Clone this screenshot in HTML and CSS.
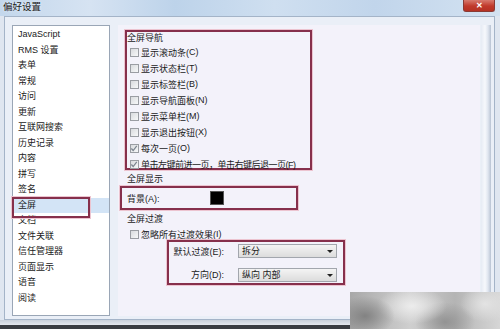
FILE: index.html
```html
<!DOCTYPE html>
<html lang="zh">
<head>
<meta charset="utf-8">
<title>偏好设置</title>
<link rel="stylesheet" href="styles.css">
</head>
<body>
<div class="window">
  <div class="titlebar">
    <span class="title">偏好设置</span>
    <span class="close">✕</span>
  </div>
  <div class="frame">
    <ul class="sidebar">
      <li>JavaScript</li>
      <li>RMS 设置</li>
      <li>表单</li>
      <li>常规</li>
      <li>访问</li>
      <li>更新</li>
      <li>互联网搜索</li>
      <li>历史记录</li>
      <li>内容</li>
      <li>拼写</li>
      <li>签名</li>
      <li class="selected">全屏</li>
      <li>文档</li>
      <li>文件关联</li>
      <li>信任管理器</li>
      <li>页面显示</li>
      <li>语音</li>
      <li>阅读</li>
    </ul>
    <div class="panel">
      <div class="mark box-nav">
        <div class="group-title">全屏导航</div>
        <label class="row"><span class="cb"></span>显示滚动条(<u>C</u>)</label>
        <label class="row"><span class="cb"></span>显示状态栏(<u>T</u>)</label>
        <label class="row"><span class="cb"></span>显示标签栏(<u>B</u>)</label>
        <label class="row"><span class="cb"></span>显示导航面板(<u>N</u>)</label>
        <label class="row"><span class="cb"></span>显示菜单栏(<u>M</u>)</label>
        <label class="row"><span class="cb"></span>显示退出按钮(<u>X</u>)</label>
        <label class="row"><span class="cb checked"><svg viewBox="0 0 9 9" width="9" height="9"><path d="M1.5 4.5 L3.6 6.8 L7.6 1.6" fill="none" stroke="#7d8590" stroke-width="1.4"/></svg></span>每次一页(<u>O</u>)</label>
        <label class="row"><span class="cb checked"><svg viewBox="0 0 9 9" width="9" height="9"><path d="M1.5 4.5 L3.6 6.8 L7.6 1.6" fill="none" stroke="#7d8590" stroke-width="1.4"/></svg></span><span class="tight">单击左键前进一页，单击右键后退一页(<u>F</u>)</span></label>
      </div>
      <div class="section-title">全屏显示</div>
      <div class="mark box-bg">
        <span class="bg-label">背景(<u>A</u>):</span>
        <span class="swatch"></span>
      </div>
      <div class="section-title">全屏过渡</div>
      <label class="row row-plain"><span class="cb"></span>忽略所有过渡效果(<u>I</u>)</label>
      <div class="mark box-trans">
        <span class="field-label">默认过渡(<u>E</u>):</span>
        <span class="select">拆分<span class="arrow"></span></span>
        <span class="field-label">方向(<u>D</u>):</span>
        <span class="select">纵向 内部<span class="arrow"></span></span>
      </div>
    </div>
    <div class="edge"></div>
  </div>
  <div class="strip"></div>
  <div class="taskbar"></div>
  <div class="watermark"></div>
</div>
</body>
</html>
```

FILE: styles.css
```css
* { box-sizing: border-box; }
html, body { margin: 0; padding: 0; }
body {
  width: 500px;
  height: 329px;
  overflow: hidden;
  font-family: "Liberation Sans", "Noto Sans CJK SC", sans-serif;
  font-size: 9px;
  color: #1a1a1a;
  background: #dfe6f0;
}
u { text-decoration: none; }

.window {
  position: relative;
  width: 500px;
  height: 329px;
  display: flex;
  flex-direction: column;
}

.titlebar {
  position: relative;
  height: 16px;
  flex: 0 0 16px;
  background: linear-gradient(90deg, #c3d7ec 0%, #d6e3f2 18%, #bdd3ea 35%, #cfdff0 55%, #c1d5eb 75%, #d3e2f1 100%);
  display: flex;
  align-items: center;
  padding-left: 3px;
}
.title {
  font-size: 9.5px;
  color: #1b1b1b;
  text-shadow: 0 0 3px #eef4fb;
  line-height: 12px;
  margin-top: -3px;
}
.close {
  position: absolute;
  right: 5px;
  top: 0;
  width: 32px;
  height: 12px;
  border-radius: 0 0 3px 3px;
  background: linear-gradient(#d77a6e, #c0392b 55%, #b53224);
  border: 1px solid #8a3a34;
  border-top: none;
  color: #fff;
  font-size: 8px;
  line-height: 11px;
  text-align: center;
  font-weight: bold;
}

.frame {
  flex: 0 0 304px;
  margin: 0 5px 0 4px;
  border: 1px solid #a4b4c8;
  background: #eaeff7;
  padding: 8px 2px 3px 7px;
  display: flex;
}

.sidebar {
  list-style: none;
  margin: 0;
  padding: 1px 0 0 0;
  width: 98px;
  flex: 0 0 98px;
  height: 291px;
  background: #ffffff;
  border: 1px solid #9aa6b6;
}
.sidebar li {
  height: 15.5px;
  line-height: 15.5px;
  padding-left: 5px;
  white-space: nowrap;
}
.sidebar li.selected {
  position: relative;
  background: #d3e4f6;
}
.sidebar li.selected::after {
  content: "";
  position: absolute;
  left: -1px;
  top: -0.5px;
  width: 74px;
  height: 17px;
  border: 2px solid #86304c;
  box-shadow: 0 0 0 1px #ecc4d0;
}

.panel {
  margin-left: 8px;
  width: 362px;
  flex: 0 0 362px;
  height: 291px;
  background: #f3f2fa;
  padding-top: 5px;
  display: flex;
  flex-direction: column;
  align-items: flex-start;
}

.mark {
  border: 2px solid #86304c;
  box-shadow: 0 0 0 1px #ecc4d0;
}

.box-nav {
  margin-left: 7px;
  width: 187px;
  height: 140px;
  padding-top: 1px;
}
.group-title {
  height: 11px;
  line-height: 11px;
}
.row {
  display: flex;
  align-items: center;
  height: 16px;
  padding-left: 3px;
  white-space: nowrap;
}
.tight { letter-spacing: -0.5px; }
.cb {
  width: 9px;
  height: 9px;
  flex: 0 0 9px;
  margin-right: 2px;
  border: 1px solid #9a9da3;
  background: linear-gradient(135deg, #d9dbde, #f7f8f9);
  display: flex;
}
.cb.checked svg { margin: -1px 0 0 -1px; }

.section-title {
  margin-left: 9px;
  height: 13px;
  line-height: 13px;
  margin-top: 3px;
}

.box-bg {
  margin-left: 2px;
  width: 178px;
  height: 24px;
  display: flex;
  align-items: center;
  padding-left: 5px;
}
.bg-label { width: 83px; }
.swatch {
  width: 14px;
  height: 14px;
  background: #000;
  border: 1px solid #555;
}

.box-bg + .section-title { margin-top: 3px; }

.row-plain {
  margin-left: 9px;
  height: 16px;
}

.box-trans {
  margin-left: 49px;
  margin-top: -2px;
  width: 178px;
  height: 45px;
  display: grid;
  grid-template-columns: 55px 99px;
  column-gap: 14px;
  row-gap: 7px;
  padding-top: 1px;
  align-items: center;
}
.field-label {
  text-align: right;
  white-space: nowrap;
}
.select {
  position: relative;
  height: 14px;
  line-height: 12px;
  padding-left: 3px;
  border: 1px solid #a2a6ad;
  background: linear-gradient(#f4f4f4, #dcdcdc);
  white-space: nowrap;
}
.arrow {
  position: absolute;
  right: 3px;
  top: 5px;
  width: 0;
  height: 0;
  border-left: 3px solid transparent;
  border-right: 3px solid transparent;
  border-top: 3px solid #222;
}

.edge {
  flex: 0 0 10px;
  margin-left: 1px;
  height: 291px;
  background: linear-gradient(90deg, #e6ebf4 0%, #f6f8fc 40%, #dfe5ef 70%, #b8c3d3 100%);
}

.strip {
  flex: 0 0 5px;
  background: linear-gradient(#c9d0da, #e4e8ee);
}
.taskbar {
  flex: 0 0 4px;
  background: #3a3d42;
}

.watermark {
  position: absolute;
  left: 350px;
  top: 292px;
  width: 150px;
  height: 37px;
  background:
    radial-gradient(ellipse 30px 20px at 15px 24px, rgba(125,125,125,0.9), rgba(125,125,125,0) 100%),
    radial-gradient(ellipse 35px 18px at 62px 14px, rgba(238,238,238,0.95), rgba(238,238,238,0) 100%),
    radial-gradient(ellipse 30px 20px at 95px 30px, rgba(140,140,140,0.85), rgba(140,140,140,0) 100%),
    radial-gradient(ellipse 25px 18px at 135px 12px, rgba(230,230,230,0.9), rgba(230,230,230,0) 100%),
    linear-gradient(90deg, #a8a8a8, #cfcfcf 40%, #b4b4b4 70%, #d6d6d6);
}
```
